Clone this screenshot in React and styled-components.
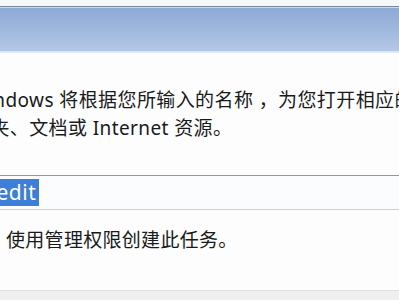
import React from "react";
import styled, { createGlobalStyle } from "styled-components";

const GlobalStyle = createGlobalStyle`
  html, body {
    margin: 0;
    padding: 0;
    background: #fdfdfe;
  }
`;

const Window = styled.div`
  width: 399px;
  height: 300px;
  overflow: hidden;
  display: flex;
  flex-direction: column;
  background: #fdfdfe;
  font-family: "Noto Sans", "Noto Sans CJK SC", sans-serif;
  color: #1a1a1a;
`;

const TopEdge = styled.div`
  height: 6px;
  background: #f6f7f9;
  border-bottom: 1px solid #7d8997;
`;

const Band = styled.div`
  height: 43px;
  border-top: 1px solid #c9d6ea;
  border-bottom: 2px solid #dfe7f3;
  background: linear-gradient(to bottom, #8fa9d6 0%, #9fb8de 50%, #b4c8e7 100%);
`;

const Body = styled.div`
  flex: 1;
  display: flex;
  flex-direction: column;
`;

const Message = styled.div`
  margin-top: 33px;
  font-size: 19px;
  letter-spacing: 0.4px;
  line-height: 28px;
  white-space: nowrap;
`;

const Line = styled.div`
  margin-left: ${(p) => p.$shift}px;
`;

const Field = styled.div`
  margin-top: 33px;
  height: 33px;
  border-top: 1px solid #8d99a6;
  border-bottom: 1px solid #c9d1da;
  background: #fbfcfe;
  display: flex;
  align-items: center;
`;

const Selected = styled.span`
  margin-left: -38px;
  background: #3c7ed8;
  color: #ffffff;
  font-size: 21px;
  line-height: 27px;
  padding-right: 3px;
  letter-spacing: 0.5px;
`;

const CheckText = styled.div`
  margin-top: 16px;
  padding-left: 6px;
  font-size: 19px;
  letter-spacing: 0.3px;
  line-height: 28px;
  white-space: nowrap;
`;

const Footer = styled.div`
  margin-top: auto;
  height: 9px;
  background: #efefef;
  border-top: 1px solid #e0e0e0;
`;

export default function App() {
  return (
    <>
      <GlobalStyle />
      <Window>
        <TopEdge />
        <Band />
        <Body>
          <Message>
            <Line $shift={-30}>Windows 将根据您所输入的名称 ，为您打开相应的程序、文件</Line>
            <Line $shift={-29}>件夹、文档或 Internet 资源。</Line>
          </Message>
          <Field>
            <Selected>regedit</Selected>
          </Field>
          <CheckText>使用管理权限创建此任务。</CheckText>
          <Footer />
        </Body>
      </Window>
    </>
  );
}
